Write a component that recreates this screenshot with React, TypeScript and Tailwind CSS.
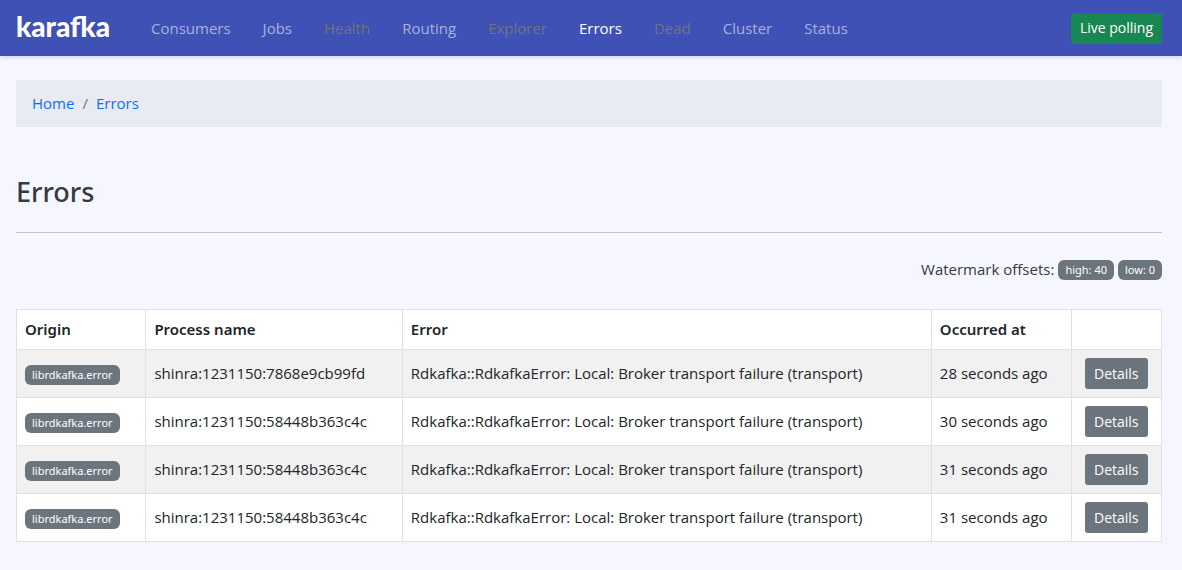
import React from "react";

type NavItem = { label: string; state?: "active" | "disabled" };

const navItems: NavItem[] = [
  { label: "Consumers" },
  { label: "Jobs" },
  { label: "Health", state: "disabled" },
  { label: "Routing" },
  { label: "Explorer", state: "disabled" },
  { label: "Errors", state: "active" },
  { label: "Dead", state: "disabled" },
  { label: "Cluster" },
  { label: "Status" },
];

const message = "Rdkafka::RdkafkaError: Local: Broker transport failure (transport)";

const errors = [
  { id: 1, process: "shinra:1231150:7868e9cb99fd", at: "28 seconds ago" },
  { id: 2, process: "shinra:1231150:58448b363c4c", at: "30 seconds ago" },
  { id: 3, process: "shinra:1231150:58448b363c4c", at: "31 seconds ago" },
  { id: 4, process: "shinra:1231150:58448b363c4c", at: "31 seconds ago" },
];

function navColor(state?: NavItem["state"]) {
  if (state === "active") return "text-white";
  if (state === "disabled") return "text-[#6c757d]";
  return "text-[#a9b0dd]";
}

function Badge({ children }: { children: React.ReactNode }) {
  return (
    <span className="inline-flex h-5 items-center rounded-md bg-[#6c757d] px-[7px] font-['Noto_Sans',sans-serif] text-[11px] whitespace-nowrap text-white">
      {children}
    </span>
  );
}

function Navbar() {
  return (
    <nav className="flex h-14 items-center bg-[#3f51b5] pr-5 pl-4 shadow-[0_2px_4px_rgba(0,0,0,0.12)]">
      <a
        href="#home"
        className="w-[95px] pb-1 font-['Lato','Liberation_Sans',sans-serif] text-[28px] leading-8 font-black text-white"
      >
        karafka
      </a>
      <ul className="ml-10 flex gap-8">
        {navItems.map((item) => (
          <li key={item.label}>
            <a href={"#" + item.label.toLowerCase()} className={navColor(item.state)}>
              {item.label}
            </a>
          </li>
        ))}
      </ul>
      <button type="button" className="ml-auto h-[31px] rounded-[3px] bg-[#198754] px-[9px] text-sm text-white">
        Live polling
      </button>
    </nav>
  );
}

function ErrorsTable() {
  const head = "border border-[#dee2e6] px-2 text-left font-['Noto_Sans',sans-serif] font-semibold";
  const cell = "border border-[#dee2e6] px-2 whitespace-nowrap";
  return (
    <table className="mt-7 w-full table-fixed border-collapse bg-white text-[#212529]">
      <colgroup>
        <col className="w-[11.3%]" />
        <col className="w-[22.4%]" />
        <col />
        <col className="w-[12.2%]" />
        <col className="w-[7.9%]" />
      </colgroup>
      <thead>
        <tr className="h-10">
          <th className={head}>Origin</th>
          <th className={head}>Process name</th>
          <th className={head}>Error</th>
          <th className={head}>Occurred at</th>
          <td className={head}></td>
        </tr>
      </thead>
      <tbody>
        {errors.map((row) => (
          <tr key={row.id} className="h-12 odd:bg-[#f1f1f1]">
            <td className={cell}>
              <Badge>librdkafka.error</Badge>
            </td>
            <td className={cell}>{row.process}</td>
            <td className={cell}>{message}</td>
            <td className={cell}>{row.at}</td>
            <td className="border border-[#dee2e6] text-center">
              <a
                href={"#error-" + row.id}
                className="inline-flex h-[31px] items-center rounded-[3px] bg-[#6c757d] px-[9px] align-middle text-sm text-white"
              >
                Details
              </a>
            </td>
          </tr>
        ))}
      </tbody>
    </table>
  );
}

export default function App() {
  return (
    <div className="min-h-screen bg-[#f5f6ff] font-['Open_Sans','Noto_Sans',sans-serif] text-[15px] leading-[23px] text-[#373a3c]">
      <Navbar />
      <main className="pt-6 pr-5 pb-7 pl-4">
        <ol className="flex gap-2 bg-[#e8ebf4] px-4 py-3 text-[#0d6efd]">
          <li>
            <a href="#home">Home</a>
          </li>
          <li aria-hidden="true" className="text-[#6c757d]">
            /
          </li>
          <li>
            <a href="#errors">Errors</a>
          </li>
        </ol>
        <h1 className="mt-12 font-['Noto_Sans',sans-serif] text-[27px] leading-[33px] font-medium">Errors</h1>
        <hr className="mt-6 border-[#c4c5cb]" />
        <div className="mt-[25px] flex items-center justify-end gap-1">
          <span>Watermark offsets:</span>
          <Badge>high: 40</Badge>
          <Badge>low: 0</Badge>
        </div>
        <ErrorsTable />
      </main>
    </div>
  );
}
